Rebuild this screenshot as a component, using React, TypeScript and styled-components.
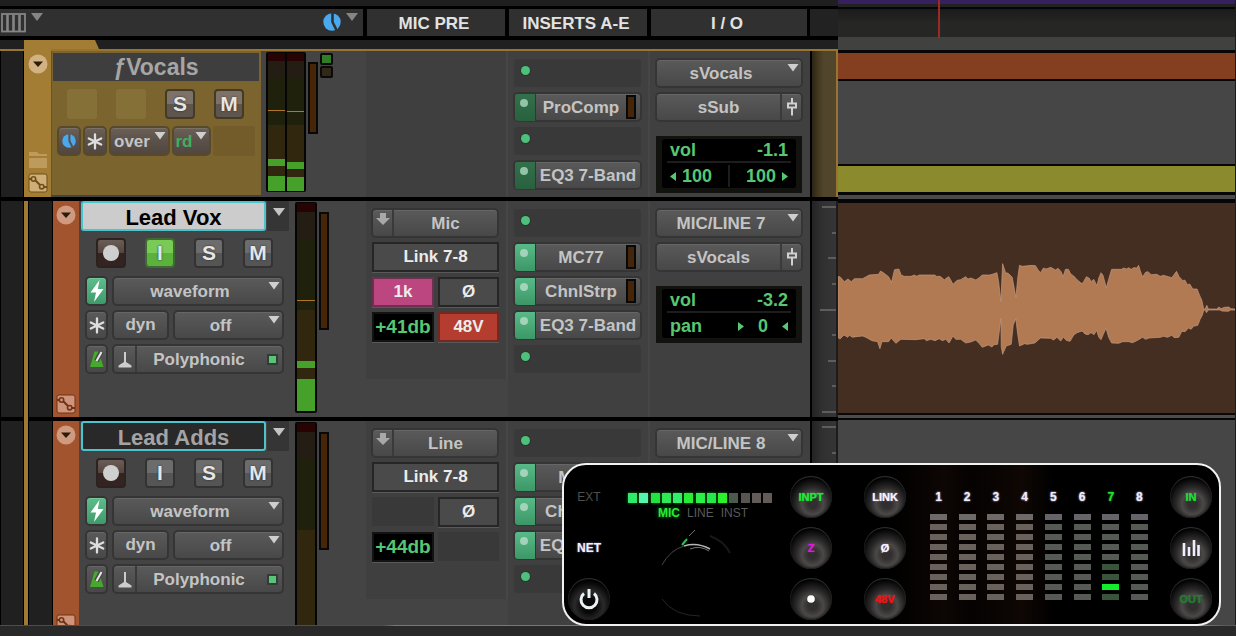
import React from "react";
import styled, { createGlobalStyle, css } from "styled-components";

const GlobalStyle = createGlobalStyle`
  * { box-sizing: border-box; }
  html, body { margin: 0; padding: 0; background: #000; }
  body, button, input, select { font-family: "Liberation Sans", Arial, sans-serif; }
  h1, h2, p { margin: 0; }
`;

/* ---------- page frame ---------- */

const Page = styled.div`
  display: flex;
  flex-direction: column;
  position: relative;
  height: 100vh;
  overflow: hidden;
  background: #000;
  color: #c4c4c4;
  font-size: 17px;
  font-weight: bold;
`;

const Workspace = styled.main`
  display: flex;
  flex: 1;
  min-height: 0;
  overflow: hidden;
`;

const Footer = styled.footer`
  flex: none;
  height: 11px;
  background: #292929;
`;

const FooterLine = styled.div`
  height: 1px;
  background: linear-gradient(90deg, #6d28b4 0 31%, #647d89 32% 58%, #9393b4 62% 96%, #5a5a5a 99%);
`;

const TrackList = styled.section`
  display: flex;
  flex-direction: column;
  flex: none;
  width: 838px;
  overflow: hidden;
`;

const TopStrip = styled.div`
  flex: none;
  height: 9px;
  background: #1f1f1f;
  border-bottom: 3px solid #000;
`;

const HeaderBar = styled.header`
  display: flex;
  flex: none;
  height: 31px;
  border-bottom: 4px solid #000;
  background: #222;
`;

const HeaderTools = styled.div`
  display: flex;
  justify-content: space-between;
  width: 366px;
  padding: 4px 5px 0 1px;
  background: #303030;
  border-right: 3px solid #000;
`;

const ToolGroup = styled.div`
  display: flex;
  gap: 5px;
`;

const ToolButton = styled.button`
  display: flex;
  gap: 5px;
  align-items: flex-start;
  height: 20px;
  padding: 0;
  border: 0;
  background: none;
`;

const HeaderCell = styled.div<{ $w: number }>`
  display: flex;
  align-items: center;
  justify-content: center;
  width: ${(p) => p.$w}px;
  padding: 3px 4px 0 0;
  color: #e2e2e2;
  background: #303030;
  border-left: 1px solid #000;
  border-right: 3px solid #000;
`;

/* ---------- folder track ---------- */

const FolderTop = styled.div`
  display: flex;
  flex: none;
  height: 9px;
  background: #202020;
`;

const FolderTab = styled.svg`
  display: block;
  margin-left: 24px;
`;

const Lane = styled.article<{ $h: number; $folder?: boolean }>`
  display: flex;
  flex: none;
  height: ${(p) => p.$h}px;
  background: #444;
  border-bottom: 4px solid #000;
  ${(p) =>
    p.$folder &&
    css`
      border-top: 2px solid #97742f;
    `}
`;

const LaneHead = styled.div`
  display: flex;
  width: 366px;
`;

const Gutter = styled.div<{ $w: number }>`
  width: ${(p) => p.$w}px;
  background: #202020;
  border-left: 1px solid #000;
  border-right: 1px solid #000;
`;

const FolderRail = styled.div`
  width: 4px;
  margin-bottom: -4px;
  background: #a07a30;
`;

const FolderEdge = styled.div`
  flex: none;
  width: 28px;
  background: linear-gradient(90deg, #000 0 2px, #2a2418 2px, #43381f 8px, #51452c 14px);
  border-right: 2px solid #97742f;
`;

const ColorStrip = styled.div<{ $bg: string }>`
  display: flex;
  flex-direction: column;
  align-items: center;
  width: 26px;
  padding: 4px 0 3px;
  background: ${(p) => p.$bg};
`;

const FolderStrip = styled(ColorStrip)`
  gap: 3px;
  width: 27px;
  margin-top: -2px;
  padding: 5px 0 4px;
`;

const StripButton = styled.button<{ $bottom?: boolean }>`
  display: block;
  height: 20px;
  margin-top: ${(p) => (p.$bottom ? "auto" : "0")};
  padding: 0;
  border: 0;
  background: none;
  svg { display: block; }
`;

const FolderPanel = styled.div`
  display: flex;
  flex-direction: column;
  width: 210px;
  margin-bottom: 2px;
  padding: 2px 2px 0 1px;
  background: #7c642f;
  border-left: 1px solid #5b5344;
`;

const FolderName = styled.h1`
  height: 28px;
  line-height: 29px;
  text-align: center;
  color: #a6a6a6;
  background: #3e3e3e;
  font-size: 23px;
`;

const ButtonRow = styled.div<{ $top?: number; $left?: number; $gap?: number }>`
  display: flex;
  gap: ${(p) => p.$gap ?? 4}px;
  margin-top: ${(p) => p.$top ?? 4}px;
  padding-left: ${(p) => p.$left ?? 0}px;
`;

const Blank = styled.div<{ $w: number; $bg: string }>`
  width: ${(p) => p.$w}px;
  height: 30px;
  border-radius: 3px;
  background: ${(p) => p.$bg};
`;

/* ---------- controls ---------- */

const plate = css`
  color: #c4c4c4;
  background: linear-gradient(#5a5a5a, #515151 50%, #484848);
  border: 2px solid #353535;
  border-radius: 5px;
  box-shadow: inset 0 1px 0 #666;
  font-size: 17px;
  font-weight: bold;
`;

const warm = css`
  background: linear-gradient(#6a6056, #5b5149 50%, #514740);
  border-color: #574a2c;
  box-shadow: inset 0 1px 0 #7b7066;
`;

const Plate = styled.button<{ $w?: number; $warm?: boolean }>`
  display: flex;
  align-items: center;
  justify-content: center;
  flex: none;
  width: ${(p) => (p.$w ? `${p.$w}px` : "100%")};
  height: 30px;
  padding: 0;
  ${plate}
  ${(p) => p.$warm && warm}
`;

const BoltButton = styled(Plate)`
  background: linear-gradient(#5cbd8b, #3f9a6a);
  box-shadow: inset 0 1px 0 #74c89b;
`;

const PlateCell = styled.span<{ $w: number; $side: "left" | "right"; $high?: boolean }>`
  display: flex;
  align-items: ${(p) => (p.$high ? "flex-start" : "center")};
  justify-content: center;
  width: ${(p) => p.$w}px;
  height: 26px;
  padding-top: ${(p) => (p.$high ? 3 : 0)}px;
  border-${(p) => (p.$side === "left" ? "right" : "left")}: 2px solid #3a3a3a;
`;

const PlateLabel = styled.span`
  flex: 1;
  padding-top: 1px;
  text-align: center;
`;

const SquareButton = styled.button<{ $tone?: "record" | "input" | "folder" }>`
  display: flex;
  align-items: center;
  justify-content: center;
  width: 30px;
  height: 30px;
  padding: 0;
  color: #e6e6e6;
  font-size: 21px;
  font-weight: bold;
  border: 2px solid #333;
  border-radius: 4px;
  text-shadow: 0 0 2px #222;
  background: linear-gradient(#6c6c6c 0 50%, #555 50% 100%);
  ${(p) =>
    p.$tone === "record" &&
    css`
      background: linear-gradient(#6a5c56 0%, #54453f 50%, #332421 51% 100%);
      border-color: #2c2321;
    `}
  ${(p) =>
    p.$tone === "input" &&
    css`
      background: linear-gradient(#79cb55 0 50%, #5bb13c 50% 100%);
      border-color: #3f6a33;
    `}
  ${(p) =>
    p.$tone === "folder" &&
    css`
      background: linear-gradient(#7d7268 0 50%, #5e554d 50% 100%);
      border-color: #443a26;
    `}
`;

const RecordDot = styled.span`
  width: 16px;
  height: 16px;
  border-radius: 50%;
  background: #cfcfcf;
`;

const SelectShell = styled.span<{ $w?: number }>`
  position: relative;
  display: block;
  flex: none;
  width: ${(p) => (p.$w ? `${p.$w}px` : "100%")};
  height: 30px;
`;

const SelectBox = styled.select<{ $warm?: boolean; $pad: number; $color?: string }>`
  appearance: none;
  display: block;
  width: 100%;
  height: 30px;
  padding: 0 ${(p) => p.$pad}px 0 0;
  text-align: center;
  text-align-last: center;
  ${plate}
  ${(p) => p.$warm && warm}
  ${(p) => p.$color && `color: ${p.$color};`}
`;

const CaretMark = styled.svg`
  position: absolute;
  top: 6px;
  right: 4px;
  pointer-events: none;
`;

const Caret = ({ color = "#c4c4c4" }: { color?: string }) => (
  <svg width="12" height="8" viewBox="0 0 12 8" aria-hidden="true">
    <path d="M0 0H12L6 8Z" fill={color} />
  </svg>
);

type DropProps = { label: string; value: string; w?: number; warm?: boolean; pad?: number; color?: string };

const Drop = ({ label, value, w, warm: isWarm, pad = 16, color }: DropProps) => (
  <SelectShell $w={w}>
    <SelectBox aria-label={label} $warm={isWarm} $pad={pad} $color={color} defaultValue={value}>
      <option>{value}</option>
    </SelectBox>
    <CaretMark width="12" height="8" viewBox="0 0 12 8" aria-hidden="true">
      <path d="M0.500 0H11.500L6 7.500Z" fill="#cfcfcf" />
    </CaretMark>
  </SelectShell>
);

const ControlPanel = styled.div`
  width: 213px;
  padding: 0 3px 0 2px;
`;

const NameRow = styled.div`
  display: flex;
  gap: 1px;
`;

const NameField = styled.input<{ $selected?: boolean }>`
  width: 185px;
  height: 30px;
  padding: 3px 0 0;
  text-align: center;
  font-size: 22px;
  font-weight: bold;
  border: 2px solid #4cc4cc;
  border-radius: 3px;
  color: ${(p) => (p.$selected ? "#000" : "#a4a4a4")};
  background: ${(p) => (p.$selected ? "#cccccc" : "#292929")};
`;

const NameMenu = styled.button`
  display: flex;
  align-items: flex-start;
  justify-content: center;
  width: 22px;
  height: 30px;
  padding: 7px 0 0 2px;
  border: 0;
  background: #353535;
`;

const ElasticLed = styled.span`
  width: 11px;
  height: 11px;
  margin: 0 4px 0 6px;
  background: #58c478;
  border: 2px solid #303c34;
  align-self: center;
`;

/* ---------- meters ---------- */

const MeterZone = styled.div<{ $left: number }>`
  display: flex;
  gap: 2px;
  padding-left: ${(p) => p.$left}px;
`;

const MeterFrame = styled.div<{ $h: number }>`
  display: flex;
  gap: 2px;
  height: ${(p) => p.$h}px;
  margin-top: 1px;
  padding: 1px 2px;
  background: #050505;
  border-radius: 2px;
`;

const MeterBar = styled.div<{ $w: number }>`
  display: flex;
  flex-direction: column;
  width: ${(p) => p.$w}px;
`;

const MeterSeg = styled.div<{ $h: number; $c: string }>`
  flex: none;
  height: ${(p) => p.$h}px;
  background: ${(p) => p.$c};
`;

const Reduction = styled.div<{ $h: number; $top: number }>`
  width: 10px;
  height: ${(p) => p.$h}px;
  margin-top: ${(p) => p.$top}px;
  background: #472608;
  border: 2px solid #080808;
`;

const Indicators = styled.div`
  display: flex;
  flex-direction: column;
  gap: 1px;
  padding-top: 2px;
`;

const Indicator = styled.span<{ $c: string }>`
  width: 13px;
  height: 12px;
  background: ${(p) => p.$c};
  border: 2px solid #0a0a0a;
  border-radius: 2px;
`;

const RED = "#270403";
const UMBER = "#231d14";
const OLIVE = "#20210c";
const BROWN = "#30270e";
const GREEN = "#46a12a";
const PEAK = "#b0762c";

type Seg = [number, string];

const Meter = ({ segs, w = 18 }: { segs: Seg[]; w?: number }) => (
  <MeterBar $w={w}>
    {segs.map(([h, c], i) => (
      <MeterSeg key={i} $h={h} $c={c} />
    ))}
  </MeterBar>
);

const folderLeft: Seg[] = [[8, RED], [17, UMBER], [32, OLIVE], [1, PEAK], [14, OLIVE], [34, BROWN], [7, GREEN], [10, BROWN], [15, GREEN]];
const folderRight: Seg[] = [[8, RED], [17, UMBER], [33, OLIVE], [1, PEAK], [13, OLIVE], [37, BROWN], [7, GREEN], [8, BROWN], [14, GREEN]];
const voxSegs: Seg[] = [[9, RED], [27, UMBER], [61, OLIVE], [1, PEAK], [9, OLIVE], [51, BROWN], [7, GREEN], [11, BROWN], [32, GREEN]];
const addsSegs: Seg[] = [[9, RED], [27, UMBER], [71, OLIVE], [101, BROWN]];

/* ---------- mic pre column ---------- */

const MicColumn = styled.div<{ $h?: number }>`
  flex: none;
  width: 142px;
  height: ${(p) => (p.$h ? `${p.$h}px` : "auto")};
  padding: 7px 7px 0 5px;
  border-right: 2px solid #464646;
  background: #3f3f3f;
`;

const MicGrid = styled.div`
  display: grid;
  grid-template-columns: 62px 61px;
  column-gap: 4px;
  row-gap: 5px;
  padding: 4px 1px 0;
`;

const flat = css`
  height: 30px;
  padding: 0;
  font-size: 17px;
  font-weight: bold;
  color: #ececec;
  border: 2px solid #262626;
  background: #4a4a4a;
  box-shadow: 0 1px 0 #595959;
`;

const FlatButton = styled.button<{ $tone?: "pink" | "red" | "wide" }>`
  ${flat}
  ${(p) => p.$tone === "wide" && "grid-column: 1 / 3;"}
  ${(p) => p.$tone === "pink" && "background: #bb4680; border-color: #6e3050;"}
  ${(p) => p.$tone === "red" && "background: #b53d30; border-color: #702a23;"}
`;

const FlatBlank = styled.div`
  height: 29px;
  background: #393939;
`;

const Gain = styled.output`
  ${flat}
  display: flex;
  align-items: center;
  justify-content: center;
  color: #58c672;
  background: #000;
  border-color: #131313;
  font-size: 19px;
`;

const DownArrow = () => (
  <svg width="14" height="13" viewBox="0 0 14 13" aria-hidden="true">
    <path d="M4 0H10V5H14L7 12L0 5H4Z" fill="#a8a8a8" />
  </svg>
);

/* ---------- inserts column ---------- */

const InsertColumn = styled.div`
  display: flex;
  flex-direction: column;
  gap: 4px;
  flex: none;
  width: 142px;
  padding: 7px 6px 0 5px;
  background: #404040;
  border-right: 2px solid #464646;
`;

const EmptySlot = styled.div`
  height: 30px;
  padding: 7px 0 0 7px;
  background: #393939;
  border: 1px solid #404040;
  border-radius: 4px;
`;

const Dot = styled.span<{ $pale?: boolean }>`
  display: block;
  width: ${(p) => (p.$pale ? 8 : 9)}px;
  height: ${(p) => (p.$pale ? 8 : 9)}px;
  border-radius: 50%;
  background: ${(p) => (p.$pale ? "#a3d3b8" : "#4fc07c")};
  box-shadow: ${(p) => (p.$pale ? "none" : "0 0 0 1px #27382e")};
`;

const SlotTab = styled.span<{ $dim?: boolean }>`
  width: 21px;
  height: 27px;
  padding: 5px 0 0 5px;
  border-right: 1px solid #2c3a32;
  border-radius: 3px 0 0 3px;
  background: ${(p) => (p.$dim ? "linear-gradient(#33704c, #28613e)" : "linear-gradient(#58ba88, #3d9767)")};
  ${Dot} { opacity: ${(p) => (p.$dim ? 0.85 : 1)}; }
`;

const SlotLed = styled.span`
  width: 10px;
  height: 24px;
  margin-right: 4px;
  background: #45260a;
  border: 2px solid #080808;
`;

type Insert = { name: string; led?: boolean } | null;

const Inserts = ({ items, dim }: { items: Insert[]; dim?: boolean }) => (
  <InsertColumn>
    {items.map((it, i) =>
      it ? (
        <Plate key={i}>
          <SlotTab $dim={dim}>
            <Dot $pale />
          </SlotTab>
          <PlateLabel>{it.name}</PlateLabel>
          {it.led && <SlotLed />}
        </Plate>
      ) : (
        <EmptySlot key={i}>
          <Dot />
        </EmptySlot>
      )
    )}
  </InsertColumn>
);

/* ---------- I/O column ---------- */

const IoColumn = styled.div`
  display: flex;
  flex-direction: column;
  gap: 4px;
  flex: none;
  width: 160px;
  padding: 7px 7px 0 5px;
  background: #404040;
`;

const Readout = styled.div`
  height: 57px;
  margin: 10px 1px 0;
  padding: 3px 6px 4px;
  background: #12120f;
`;

const Screen = styled.div`
  display: flex;
  flex-direction: column;
  height: 49px;
  padding: 0 5px;
  color: #58c672;
  background: #000;
  border-radius: 3px;
  font-size: 18px;
`;

const ScreenRow = styled.div<{ $line?: boolean }>`
  display: flex;
  align-items: center;
  justify-content: space-between;
  height: 24px;
  padding: ${(p) => (p.$line ? 0 : 2)}px 3px 0;
  ${(p) => p.$line && "border-bottom: 2px solid #1d1d1d;"}
`;

const PanHalf = styled.span<{ $divide?: boolean }>`
  display: flex;
  align-items: center;
  gap: 6px;
  flex: 1;
  height: 22px;
  justify-content: ${(p) => (p.$divide ? "flex-start" : "flex-end")};
  ${(p) => p.$divide && "border-right: 2px solid #1d1d1d;"}
`;

const PanCenter = styled.span`
  display: flex;
  align-items: center;
  gap: 14px;
`;

const Tri = ({ dir }: { dir: "l" | "r" }) => (
  <svg width="6" height="9" viewBox="0 0 6 9" aria-hidden="true">
    <path d={dir === "l" ? "M6 0V9L0 4.500Z" : "M0 0V9L6 4.500Z"} fill="#58c672" />
  </svg>
);

const FaderIcon = () => (
  <svg width="12" height="18" viewBox="0 0 12 18" fill="none" stroke="#d0d0d0" strokeWidth="2" aria-hidden="true">
    <path d="M6 0V5M6 10V17.500" />
    <rect x="2" y="5.500" width="8" height="4" />
  </svg>
);

type IoProps = { input: string; output: string; vol?: string; pan?: string };

const Io = ({ input, output, vol, pan }: IoProps) => (
  <IoColumn>
    <Drop label="Input path" value={input} pad={16} />
    <Plate>
      <PlateLabel>{output}</PlateLabel>
      <PlateCell $w={21} $side="right">
        <FaderIcon />
      </PlateCell>
    </Plate>
    <Readout>
      {vol && (
        <Screen>
          <ScreenRow $line>
            <span>vol</span>
            <span>{vol}</span>
          </ScreenRow>
          {pan ? (
            <ScreenRow>
              <span>pan</span>
              <PanCenter>
                <Tri dir="r" />
                <span>{pan}</span>
                <Tri dir="l" />
              </PanCenter>
            </ScreenRow>
          ) : (
            <ScreenRow>
              <PanHalf $divide>
                <Tri dir="l" />
                100
              </PanHalf>
              <PanHalf>
                100
                <Tri dir="r" />
              </PanHalf>
            </ScreenRow>
          )}
        </Screen>
      )}
    </Readout>
  </IoColumn>
);

/* ---------- amplitude scale ---------- */

const Scale = styled.div`
  display: flex;
  flex-direction: column;
  align-items: flex-end;
  justify-content: space-between;
  flex: none;
  width: 28px;
  height: 216px;
  padding: 5px 0 4px;
  background: linear-gradient(90deg, #000 0 2px, #232323 2px, #303030 12px, #353535);
  border-right: 2px solid #1c1c1c;
`;

const Tick = styled.span<{ $w: number }>`
  width: ${(p) => p.$w}px;
  height: 2px;
  background: #5d5d5d;
`;

const ticks = [14, 4, 8, 4, 16, 4, 8, 4, 14];

/* ---------- icons ---------- */

const PieIcon = ({ size, bg }: { size: number; bg: string }) => (
  <svg width={size} height={size} viewBox="0 0 18 18" aria-hidden="true">
    <circle cx="9" cy="9" r="8.700" fill="#4aa9ee" />
    <path d="M9.500 0V9L14 18" fill="none" stroke={bg} strokeWidth="2.600" />
  </svg>
);

const StarIcon = () => (
  <svg width="16" height="17" viewBox="0 0 16 17" stroke="#dedede" strokeWidth="2.300" strokeLinecap="round" aria-hidden="true">
    <path d="M8 1.500V15.500M1.800 5.500L14.200 11.500M14.200 5.500L1.800 11.500" />
  </svg>
);

const BoltIcon = () => (
  <svg width="14" height="22" viewBox="0 0 14 22" aria-hidden="true">
    <path d="M9.500 0L0.500 12.500H6L4 22L13.500 9H7.800Z" fill="#fff" />
  </svg>
);

const MetronomeIcon = () => (
  <svg width="16" height="18" viewBox="0 0 16 18" aria-hidden="true">
    <path d="M5.500 1.500H9.500L14.500 17H1Z" fill="#46a82d" />
    <path d="M7.500 11L12.500 1.500" stroke="#4a4a4a" strokeWidth="5" />
    <path d="M7.500 11L12.500 2" stroke="#e8e8e8" strokeWidth="2" />
  </svg>
);

const StandIcon = () => (
  <svg width="14" height="17" viewBox="0 0 14 17" aria-hidden="true">
    <path d="M6 1H8V11L13.500 14.500V16.500H0.500V14.500L6 11Z" fill="#cccccc" />
  </svg>
);

const CircleCaret = ({ fill }: { fill: string }) => (
  <svg width="20" height="20" viewBox="0 0 20 20" aria-hidden="true">
    <circle cx="10" cy="10" r="9.500" fill={fill} />
    <path d="M5 7.500H15L10 13Z" fill="#2b1c08" />
  </svg>
);

const PlaylistIcon = ({ fill, line }: { fill: string; line: string }) => (
  <svg width="20" height="20" viewBox="0 0 20 20" aria-hidden="true">
    <rect x="1" y="1" width="18" height="18" rx="2" fill={fill} stroke={line} />
    <path d="M1 6H3.500M7.500 7.500L12 12M16 14H19" stroke={line} strokeWidth="2" fill="none" />
    <circle cx="5.500" cy="6" r="2.200" fill="none" stroke={line} strokeWidth="1.600" />
    <circle cx="13.700" cy="13.700" r="2.200" fill="none" stroke={line} strokeWidth="1.600" />
  </svg>
);

const FolderIcon = () => (
  <svg width="20" height="18" viewBox="0 0 20 18" aria-hidden="true">
    <path d="M1 1H9L11 3H19V5H1Z" fill="#bd9b5c" />
    <rect x="1" y="7" width="18" height="10" rx="1" fill="#bd9b5c" />
  </svg>
);

const GridIcon = () => (
  <svg width="25" height="20" viewBox="0 0 25 20" fill="none" stroke="#858585" aria-hidden="true">
    <rect x="1" y="1" width="23" height="17.500" strokeWidth="1.800" />
    <path d="M6.500 2V18M12.500 2V18M18.500 2V18" strokeWidth="2.600" />
  </svg>
);

/* ---------- audio track ---------- */

type TrackProps = {
  name: string;
  selected?: boolean;
  source: string;
  gain: string;
  filter?: string;
  phantom?: boolean;
  input: string;
  vol?: string;
  segs: Seg[];
};

const audioInserts: Insert[] = [null, { name: "MC77", led: true }, { name: "ChnlStrp", led: true }, { name: "EQ3 7-Band" }, null];

const AudioTrack = ({ name, selected, source, gain, filter, phantom, input, vol, segs }: TrackProps) => (
  <Lane $h={220}>
    <LaneHead>
      <Gutter $w={24} />
      <FolderRail />
      <Gutter $w={25} />
      <ColorStrip $bg="#a1542d">
        <StripButton aria-label="Show playlists">
          <CircleCaret fill="#d09a80" />
        </StripButton>
        <StripButton $bottom aria-label="Automation lanes">
          <PlaylistIcon fill="#cf9479" line="#6f3417" />
        </StripButton>
      </ColorStrip>
      <ControlPanel>
        <NameRow>
          <NameField aria-label="Track name" defaultValue={name} $selected={selected} />
          <NameMenu aria-label="Track menu">
            <Caret />
          </NameMenu>
        </NameRow>
        <ButtonRow $top={7} $left={15} $gap={19}>
          <SquareButton $tone="record" aria-label="Record">
            <RecordDot />
          </SquareButton>
          <SquareButton $tone={selected ? "input" : undefined}>I</SquareButton>
          <SquareButton>S</SquareButton>
          <SquareButton>M</SquareButton>
        </ButtonRow>
        <ButtonRow $top={8} $left={4}>
          <BoltButton $w={23} aria-label="Freeze">
            <BoltIcon />
          </BoltButton>
          <Drop label="Track view" value="waveform" w={172} />
        </ButtonRow>
        <ButtonRow $left={4}>
          <Plate $w={23} aria-label="Track options">
            <StarIcon />
          </Plate>
          <Plate $w={57}>dyn</Plate>
          <Drop label="Automation mode" value="off" w={111} />
        </ButtonRow>
        <ButtonRow $left={4}>
          <Plate $w={23} aria-label="Timebase">
            <MetronomeIcon />
          </Plate>
          <Plate $w={172}>
            <PlateCell $w={23} $side="left">
              <StandIcon />
            </PlateCell>
            <PlateLabel>Polyphonic</PlateLabel>
            <ElasticLed />
          </Plate>
        </ButtonRow>
      </ControlPanel>
      <MeterZone $left={3}>
        <MeterFrame $h={211}>
          <Meter segs={segs} />
        </MeterFrame>
        <Reduction $h={118} $top={11} />
      </MeterZone>
    </LaneHead>
    <MicColumn $h={178}>
      <Plate>
        <PlateCell $w={21} $side="left" $high>
          <DownArrow />
        </PlateCell>
        <PlateLabel>{source}</PlateLabel>
      </Plate>
      <MicGrid>
        <FlatButton $tone="wide">Link 7-8</FlatButton>
        {filter ? <FlatButton $tone="pink">{filter}</FlatButton> : <FlatBlank />}
        <FlatButton>Ø</FlatButton>
        <Gain>{gain}</Gain>
        {phantom ? <FlatButton $tone="red">48V</FlatButton> : <FlatBlank />}
      </MicGrid>
    </MicColumn>
    <Inserts items={audioInserts} />
    <Io input={input} output="sVocals" vol={vol} pan="0" />
    <Scale>
      {ticks.map((w, i) => (
        <Tick key={i} $w={w} />
      ))}
    </Scale>
  </Lane>
);

/* ---------- timeline ---------- */

const Timeline = styled.section`
  position: relative;
  display: flex;
  flex-direction: column;
  flex: 1;
  min-width: 0;
  background: #464646;
  border-right: 1px solid #1c1c1c;
`;

const Band = styled.div<{ $h: number; $c: string; $b?: number }>`
  flex: none;
  height: ${(p) => p.$h}px;
  background: ${(p) => p.$c};
  border-bottom: ${(p) => p.$b ?? 0}px solid #060606;
`;

const Clip = styled.div`
  flex: none;
  height: 212px;
  background: #442e22;
  border-bottom: 2px solid #080808;
  svg { display: block; width: 100%; height: 210px; }
`;

const Playhead = styled.div`
  position: absolute;
  top: 0;
  left: 100px;
  width: 2px;
  height: 38px;
  background: #9c2a24;
`;

const WAVE =
  "M6 80L12 80L25 95L36 87L46 95L55 86L80 86L100 75L128 73L134 63L145 70L158 80L167 97L176 59L189 57L196 75L205 79L225 79L236 75L243 79L250 75L297 75L302 79L313 79L320 84L326 90L332 84L339 80L344 88L352 103L364 91L375 89L390 80L397 87L405 84L421 90L432 82L440 75L462 75L470 73L484 68L489 95L496 154L501 41L510 68L518 70L530 82L541 142L547 80L552 46L560 49L590 46L600 47L608 60L615 68L624 54L632 57L646 52L660 60L668 55L677 65L683 80L690 58L699 58L706 72L715 78L725 89L738 100L743 98L753 80L762 85L768 95L775 88L785 107L790 85L797 68L803 76L813 113L820 88L829 58L858 58L866 54L874 57L880 53L888 58L895 53L905 54L910 46L915 62L922 81L931 67L938 65L948 74L965 73L975 79L985 76L1010 83L1024 64L1032 80L1043 92L1049 90L1057 104L1064 102L1073 117L1086 117L1093 135L1100 150L1106 177L1110 178L1115 166L1120 177L1145 177L1152 171L1158 176L1168 172L1182 171L1187 176L1200 177L1200 180L1187 180L1180 184L1160 183L1155 180L1120 180L1114 188L1110 180L1106 180L1102 195L1095 208L1088 226L1075 229L1068 238L1060 234L1050 245L1040 244L1031 262L1017 263L1010 256L997 262L985 259L975 262L942 264L931 268L922 262L907 271L892 278L880 275L862 275L850 280L829 279L820 262L812 235L804 253L797 269L790 261L784 241L776 254L767 248L758 254L749 252L740 243L725 248L715 255L704 274L692 271L684 261L676 273L664 262L655 270L645 265L615 264L598 279L575 283L567 281L552 288L546 250L541 206L533 225L527 283L512 288L501 313L497 290L496 206L486 283L475 284L469 291L458 285L440 292L430 280L420 270L405 276L390 279L375 268L360 268L352 258L340 279L330 268L320 272L310 266L298 272L285 268L272 272L265 266L240 269L195 268L180 280L166 264L158 275L138 275L132 296L125 275L108 272L90 262L80 258L60 260L50 262L40 256L35 262L24 255L12 267L6 263Z";

/* ---------- hardware preamp overlay ---------- */

const Device = styled.aside`
  position: absolute;
  right: 15px;
  bottom: 10px;
  display: flex;
  width: 659px;
  height: 163px;
  padding: 11px 4px 0;
  border: 2px solid #f2f2f2;
  border-radius: 24px;
  background: linear-gradient(90deg, #000 50%, #0d0604 58%, #050201 62%, #0e0704 70%, #000 75%);
  font-size: 12px;
`;

const KeyColumn = styled.div<{ $ml?: number }>`
  display: flex;
  flex-direction: column;
  gap: 9px;
  flex: none;
  width: 42px;
  margin-left: ${(p) => p.$ml ?? 0}px;
`;

const KeyLabel = styled.span<{ $lit?: boolean }>`
  display: flex;
  align-items: center;
  justify-content: center;
  height: 42px;
  color: ${(p) => (p.$lit ? "#f4f0ff" : "#4f4f4f")};
  font-weight: ${(p) => (p.$lit ? "bold" : "normal")};
  text-shadow: ${(p) => (p.$lit ? "0 0 2px #8f86c8" : "none")};
`;

const Key = styled.button<{ $c?: string }>`
  display: flex;
  align-items: center;
  justify-content: center;
  flex: none;
  width: 42px;
  height: 42px;
  padding: 0;
  border: 0;
  border-radius: 50%;
  color: ${(p) => p.$c ?? "#f4f0ff"};
  font-size: 11px;
  font-weight: bold;
  text-shadow: 0 0 1px currentColor;
  background: radial-gradient(circle at 54% 66%, #302e2e 0 12%, #4b4847 30%, #2a2828 46%, #121111 62%, #020202 72%);
  box-shadow: inset 0 1px 1px #343434, inset 0 -1px 2px #1c1b1b;
`;

const PowerKey = styled(Key)`
  background: radial-gradient(circle at 50% 66%, #080808 0 20%, #2b2a2a 42%, #0d0d0d 62%, #000 74%);
`;

const DialPanel = styled.div`
  width: 144px;
  margin-left: 18px;
  padding-top: 17px;
`;

const Leds = styled.div`
  display: flex;
  justify-content: space-between;
  height: 10px;
`;

const Led = styled.span<{ $c: string; $lit: boolean }>`
  width: 9px;
  height: 10px;
  background: ${(p) => p.$c};
  box-shadow: ${(p) => (p.$lit ? "0 0 3px #0f8f22" : "none")};
`;

const Modes = styled.div`
  display: flex;
  gap: 7px;
  height: 20px;
  padding-left: 30px;
  line-height: 20px;
  color: #5a5a5a;
  font-weight: normal;
`;

const ActiveMode = styled.span`
  color: #27ec35;
  font-weight: bold;
  text-shadow: 0 0 4px #0c8a1c;
`;

const Channels = styled.div`
  display: flex;
  justify-content: space-between;
  width: 218px;
  margin-left: 24px;
  padding-top: 14px;
`;

const Channel = styled.div<{ $active: boolean }>`
  display: flex;
  flex-direction: column;
  align-items: center;
  gap: 4px;
  width: 17px;
  color: ${(p) => (p.$active ? "#27e035" : "#f0ecff")};
  text-shadow: 0 0 2px currentColor;
`;

const ChannelNumber = styled.span`
  height: 20px;
  line-height: 15px;
`;

const Bar = styled.span<{ $c: string }>`
  width: 17px;
  height: 6px;
  background: ${(p) => p.$c};
`;

const ledColors = ["#2fe96c", "#55f5ad", "#22e33f", "#2fea55", "#32ee6a", "#27ee35", "#2bf045", "#25e84a", "#2cf22c", "#4b5a4d", "#57554f", "#625b57", "#625b57"];

const barColor = (ch: number, row: number) => {
  if (ch === 7 && row === 7) return "#12ee2c";
  if (ch === 7 && row > 4) return "#39543b";
  if (ch < 5) return row === 0 ? "#6f6a6a" : "#69615b";
  return row === 0 ? "#67636a" : "#565a55";
};

const Preamp = () => (
  <Device aria-label="Preamp">
    <KeyColumn>
      <KeyLabel>EXT</KeyLabel>
      <KeyLabel $lit>NET</KeyLabel>
      <PowerKey aria-label="Power">
        <svg width="22" height="22" viewBox="0 0 22 22" fill="none" stroke="#e9f2f5" strokeWidth="3" aria-hidden="true">
          <path d="M6 5.500A8 8 0 1 0 16 5.500" />
          <path d="M11 1V10" />
        </svg>
      </PowerKey>
    </KeyColumn>
    <DialPanel>
      <Leds>
        {ledColors.map((c, i) => (
          <Led key={i} $c={c} $lit={i < 9} />
        ))}
      </Leds>
      <Modes>
        <ActiveMode>MIC</ActiveMode>
        <span>LINE</span>
        <span>INST</span>
      </Modes>
      <svg width="144" height="100" viewBox="0 0 144 100" fill="none" role="img" aria-label="Gain dial">
        <path d="M34 42Q42 27 56 23" stroke="#464646" />
        <path d="M56 23Q69 19 82 26" stroke="#b5b5b5" strokeWidth="1.500" />
        <path d="M62 26Q72 22 81 28" stroke="#777" />
        <path d="M34 76Q46 93 72 93" stroke="#252525" />
        <path d="M82 13Q96 18 102 30" stroke="#181818" strokeWidth="2" />
        <path d="M54 22L59 16" stroke="#2dbd58" strokeWidth="2" />
        <path d="M61 13L67 7" stroke="#6c756e" />
      </svg>
    </DialPanel>
    <KeyColumn $ml={18}>
      <Key $c="#21e638">INPT</Key>
      <Key $c="#e018e0">Z</Key>
      <Key aria-label="Mute">
        <svg width="8" height="8" viewBox="0 0 8 8" aria-hidden="true">
          <circle cx="4" cy="4" r="3.800" fill="#fff" />
        </svg>
      </Key>
    </KeyColumn>
    <KeyColumn $ml={32}>
      <Key>LINK</Key>
      <Key>Ø</Key>
      <Key $c="#ef1515">48V</Key>
    </KeyColumn>
    <Channels>
      {[1, 2, 3, 4, 5, 6, 7, 8].map((n) => (
        <Channel key={n} $active={n === 7}>
          <ChannelNumber>{n}</ChannelNumber>
          {[0, 1, 2, 3, 4, 5, 6, 7, 8].map((r) => (
            <Bar key={r} $c={barColor(n, r)} />
          ))}
        </Channel>
      ))}
    </Channels>
    <KeyColumn $ml={22}>
      <Key $c="#21d938">IN</Key>
      <Key aria-label="Metering">
        <svg width="18" height="18" viewBox="0 0 18 18" stroke="#f2edff" strokeWidth="2.600" aria-hidden="true">
          <path d="M2 4V17M7 8V17M12 1V17M16.500 6V17" />
        </svg>
      </Key>
      <Key $c="#247c31">OUT</Key>
    </KeyColumn>
  </Device>
);

/* ---------- app ---------- */

export default function App() {
  return (
    <>
      <GlobalStyle />
      <Page>
        <Workspace>
          <TrackList>
            <TopStrip />
            <HeaderBar>
              <HeaderTools>
                <ToolButton aria-label="Column view">
                  <GridIcon />
                  <Caret color="#858585" />
                </ToolButton>
                <ToolGroup>
                  <ToolButton aria-label="Timebase view">
                    <PieIcon size={18} bg="#303030" />
                    <Caret color="#858585" />
                  </ToolButton>
                </ToolGroup>
              </HeaderTools>
              <HeaderCell $w={142}>MIC PRE</HeaderCell>
              <HeaderCell $w={142}>INSERTS A-E</HeaderCell>
              <HeaderCell $w={160}>I / O</HeaderCell>
            </HeaderBar>
            <FolderTop>
              <FolderTab width="76" height="9" viewBox="0 0 76 9" aria-hidden="true">
                <path d="M0 0H71L75 9H0Z" fill="#a37d33" />
              </FolderTab>
            </FolderTop>
            <Lane $h={152} $folder>
              <LaneHead>
                <Gutter $w={24} />
                <FolderStrip $bg="#a37d33">
                  <StripButton aria-label="Close folder">
                    <CircleCaret fill="#d2b283" />
                  </StripButton>
                  <StripButton $bottom aria-label="Folder options">
                    <FolderIcon />
                  </StripButton>
                  <StripButton aria-label="Automation lanes">
                    <PlaylistIcon fill="#cfae77" line="#6f5016" />
                  </StripButton>
                </FolderStrip>
                <FolderPanel>
                  <FolderName>ƒVocals</FolderName>
                  <ButtonRow $top={8} $left={14} $gap={19}>
                    <Blank $w={30} $bg="#857038" />
                    <Blank $w={30} $bg="#857038" />
                    <SquareButton $tone="folder">S</SquareButton>
                    <SquareButton $tone="folder">M</SquareButton>
                  </ButtonRow>
                  <ButtonRow $top={7} $left={4} $gap={2}>
                    <Plate $w={24} $warm aria-label="Timebase">
                      <PieIcon size={14} bg="#5b5149" />
                    </Plate>
                    <Plate $w={24} $warm aria-label="Track options">
                      <StarIcon />
                    </Plate>
                    <Drop label="Automation write mode" value="over" w={61} pad={15} warm />
                    <Drop label="Automation mode" value="rd" w={39} pad={15} warm color="#3fae62" />
                    <Blank $w={42} $bg="#745b2a" />
                  </ButtonRow>
                </FolderPanel>
                <MeterZone $left={5}>
                  <MeterFrame $h={140}>
                    <Meter segs={folderLeft} w={17} />
                    <Meter segs={folderRight} w={17} />
                  </MeterFrame>
                  <Reduction $h={72} $top={11} />
                  <Indicators>
                    <Indicator $c="#2f7d26" />
                    <Indicator $c="#302818" />
                  </Indicators>
                </MeterZone>
              </LaneHead>
              <MicColumn />
              <Inserts items={[null, { name: "ProComp", led: true }, null, { name: "EQ3 7-Band" }]} dim />
              <Io input="sVocals" output="sSub" vol="-1.1" />
              <FolderEdge />
            </Lane>
            <AudioTrack
              name="Lead Vox"
              selected
              source="Mic"
              gain="+41db"
              filter="1k"
              phantom
              input="MIC/LINE 7"
              vol="-3.2"
              segs={voxSegs}
            />
            <AudioTrack name="Lead Adds" source="Line" gain="+44db" input="MIC/LINE 8" segs={addsSegs} />
          </TrackList>
          <Timeline>
            <Band $h={4} $c="#36205e" />
            <Band $h={5} $c="#222222" $b={2} />
            <Band $h={28} $c="linear-gradient(#1b1b1b, #262624 50%)" />
            <Band $h={16} $c="#41423f" $b={3} />
            <Band $h={28} $c="#843f20" $b={2} />
            <Band $h={85} $c="#464646" $b={2} />
            <Band $h={29} $c="#8b8b2e" $b={3} />
            <Band $h={8} $c="#4a4a4a" $b={4} />
            <Clip>
              <svg viewBox="6 -141 1194 630" preserveAspectRatio="none" role="img" aria-label="Lead Vox waveform">
                <path d={WAVE} fill="#b17a53" stroke="#c59a80" strokeWidth="2" />
              </svg>
            </Clip>
            <Band $h={5} $c="#4c4c4c" $b={2} />
            <Playhead />
          </Timeline>
        </Workspace>
        <Footer>
          <FooterLine />
        </Footer>
        <Preamp />
      </Page>
    </>
  );
}
